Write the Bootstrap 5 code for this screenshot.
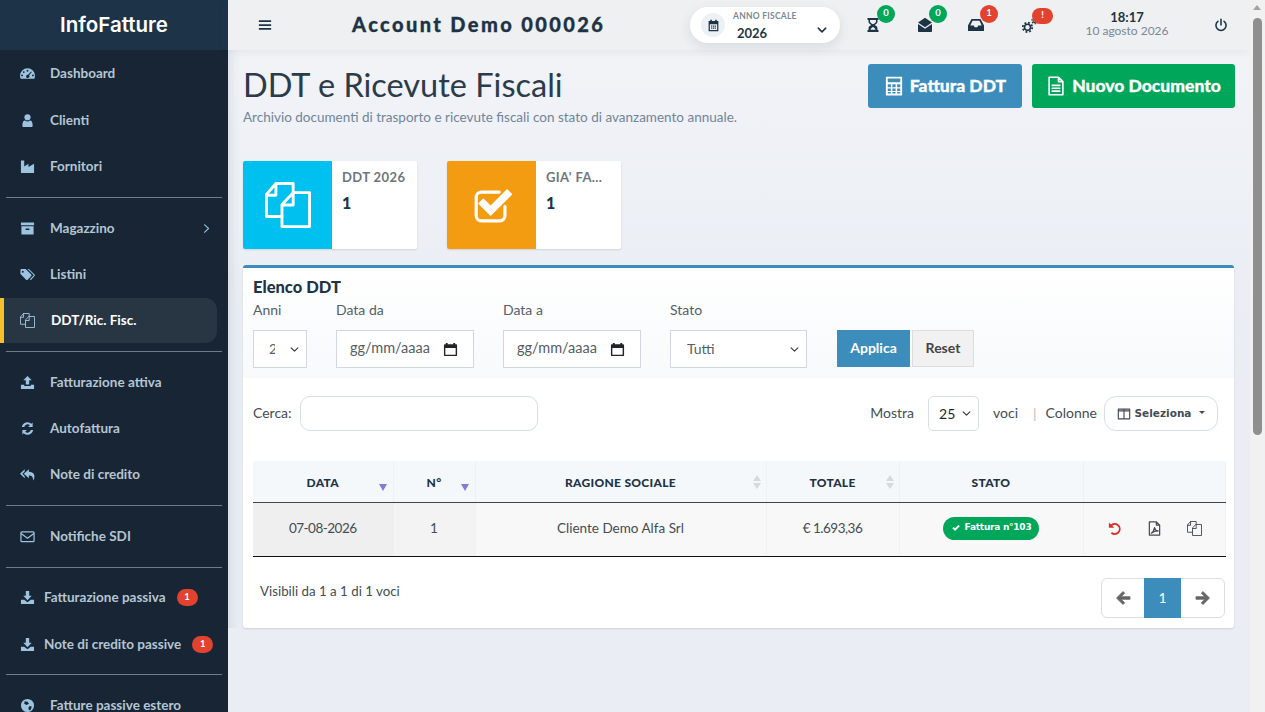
<!DOCTYPE html>
<html lang="it">
  <head>
    <meta charset="UTF-8" />
    <meta name="viewport" content="width=device-width, initial-scale=1.0" />
    <title>InfoFatture - DDT e Ricevute Fiscali</title>
    <link
      rel="stylesheet"
      href="https://cdn.jsdelivr.net/npm/bootstrap@5.3.3/dist/css/bootstrap.min.css"
    />
    <style>
      body { font-family: Lato, "Liberation Sans", sans-serif; font-size: 14px; color: #444c54; background: #eaeef4; }
      .app-shell { min-height: 1161px; padding-right: 15px; }
      .ico { width: 1em; height: 1em; fill: currentColor; flex: none; }
      .ico-line { fill: none; stroke: currentColor; stroke-width: 1.3; stroke-linejoin: round; stroke-linecap: round; }
      .heavy { -webkit-text-stroke: .3px currentColor; }

      /* window scrollbar */
      .win-scroll { position: fixed; top: 0; right: 0; bottom: 0; width: 15px; background: #f1f1f1; z-index: 10; }
      .win-scroll::before { content: ""; position: absolute; top: 5px; left: 3px; border-left: 4.5px solid transparent; border-right: 4.5px solid transparent; border-bottom: 5px solid #a3a3a3; }
      .win-thumb { position: absolute; top: 18px; left: 3px; width: 9px; height: 417px; background: #8f8f8f; border-radius: 5px; }

      /* sidebar */
      .side { width: 228px; flex: none; background: #172534; color: #b5c5d3; }
      .brand { height: 50px; background: #1d3448; color: #fff; font-family: Inter, sans-serif; font-weight: 600; font-size: 20.5px; }
      .side-link { height: 46px; padding-left: 20px; color: #b5c5d3; font-weight: 700; font-size: 13.5px; text-decoration: none; position: relative; }
      .side-link.first { height: 47px; padding-bottom: 1px; }
      .side-link .ico { font-size: 15px; color: #9cc3e0; }
      .side-link .lbl { margin-left: 15px; }
      .side-link.tight .lbl { margin-left: 9px; }
      .side-link.tight + .side-link.tight { margin-top: 1px; }
      .side-link.on { height: 45px; margin: 1px 11px 0 2px; padding-left: 18px; background: #283644; border-radius: 0 12px 12px 0; color: #fff; }
      .side-link.on::before { content: ""; position: absolute; left: -2px; top: 0; bottom: 0; width: 4px; background: #f5c02c; }
      .side-link.on .lbl { margin-left: 16px; }
      .side-rule { margin: 8px 6px 7px 6px; height: 1px; background: #6b7c8b; }
      .side-rule.snug { margin-bottom: 6px; }
      .side-rule.snug-top { margin-top: 7px; }
      .side-count { background: #e2432f; color: #fff; font-size: 9.5px; font-weight: 700; width: 21px; height: 17px; border-radius: 9px; margin-left: 11px; }

      /* topbar */
      .topbar { height: 50px; background: #eef0f1; padding-left: 30px; color: #1e3346; box-shadow: 0 2px 10px rgba(60, 80, 100, .08); position: relative; }
      .acct { font-weight: 900; font-size: 20px; letter-spacing: 2.4px; margin-left: 80px; width: 338px; white-space: nowrap; margin-top: -2px; }
      .year-pill { width: 150px; height: 36px; background: #fff; border-radius: 18px; box-shadow: 0 4px 12px rgba(60, 80, 100, .12); padding: 2px 12px 0 11px; }
      .year-ico { width: 24px; height: 24px; border-radius: 50%; background: #edf1f5; font-size: 13px; margin-top: -2px; }
      .year-cap { font-size: 8.5px; font-weight: 700; color: #7b8794; letter-spacing: .25px; line-height: 1; }
      .year-val { font-size: 13px; font-weight: 700; line-height: 1; margin-top: 6px; padding-left: 4px; }
      .top-ico { position: relative; font-size: 16px; width: 16px; margin-top: -1px; }
      .top-num { position: absolute; top: -12px; left: 12px; width: 18px; height: 18px; border-radius: 50%; color: #fff; font-size: 9.5px; font-weight: 700; }
      .top-num.wide { width: 21px; height: 16px; border-radius: 8px; top: -9px; left: 10px; }
      .num-green { background: #00a65a; }
      .num-red { background: #e2432f; }
      .clock { width: 110px; line-height: 1.1; margin-top: -3px; }
      .clock b { font-size: 13px; }
      .clock span { font-size: 12px; color: #7b8794; }

      /* page head */
      .page-body { padding: 14px 15px 0 15px; background: linear-gradient(180deg, #f1f3f7 0, #eaeef4 260px); box-shadow: inset 12px 0 12px -10px rgba(60, 80, 100, .14); }
      .page-title { font-size: 32.5px; font-weight: 400; color: #2c3b49; line-height: 44px; margin: -1px 0 1px; }
      .page-sub { font-size: 13.5px; color: #71859a; line-height: 18px; }
      .btn-big { height: 44px; font-size: 17.500px; font-weight: 900; color: #fff; border-radius: 3px; border: 0; padding: 0; }
      .btn-big .ico { font-size: 20px; margin-right: 6px; }
      .btn-blue { background: #3c8dbc; width: 154px; }
      .btn-green { background: #00a65a; width: 203px; }

      /* info boxes */
      .stat-box { width: 174px; height: 88px; background: #fff; border-radius: 2px; box-shadow: 0 1px 2px rgba(0, 0, 0, .12); overflow: hidden; }
      .stat-ico { width: 89px; color: #fff; font-size: 46px; }
      .stat-txt { padding-left: 10px; }
      .stat-cap { font-size: 13px; font-weight: 700; letter-spacing: .4px; color: #6c757d; margin-top: 8px; line-height: 16px; }
      .stat-num { font-size: 16px; font-weight: 900; color: #1e3346; margin-top: 8px; line-height: 20px; }
      .bg-sky { background: #00c0ef; }
      .bg-amber { background: #f39c12; }

      /* list card */
      .list-box { border: 0; border-top: 3px solid #3c8dbc; border-radius: 3px; box-shadow: 0 1px 2px rgba(0, 0, 0, .12); height: 363px; background: #fff; width: 991px; margin-top: 16px; }
      .filter-zone { height: 110px; padding: 7px 10px 0; background: linear-gradient(180deg, #fff 0, #f7f9fb 100%); }
      .list-title { font-size: 16.5px; font-weight: 900; color: #1e3346; line-height: 24px; }
      .fld-label { font-size: 14px; color: #555e66; line-height: 21px; margin-bottom: 10px; }
      .fld { height: 38px; border-radius: 0; border: 1px solid #d2d6de; font-size: 14px; color: #555e66; background-color: #fff; padding-top: 4px; padding-bottom: 6px; }
      .form-select.fld, .form-select.round-fld { background-size: 11px 9px; background-position: right 6px center; }
      .fld-year { width: 54px; padding-left: 15px; padding-right: 31px; }
      .fld-date { width: 138px; padding: 0 15px 2px 13px; font-size: 14.5px; }
      .fld-date .ico { font-size: 15px; color: #212529; margin-top: 2px; }
      .fld-state { width: 137px; padding-left: 16px; }
      .btn-apply { background: #3c8dbc; color: #fff; height: 37px; width: 73px; font-weight: 700; font-size: 14px; border-radius: 0; border: 0; padding-bottom: 8px; }
      .btn-reset { background: #f1f1f1; color: #444; height: 37px; width: 62px; font-weight: 700; font-size: 14px; border-radius: 0; border: 1px solid #ddd; padding-bottom: 8px; }
      .round-fld { height: 35px; border: 1px solid #d5dfe8; border-radius: 10px; font-size: 14px; }
      .pick-btn { height: 35px; width: 114px; border: 1px solid #d5dfe8; border-radius: 12px; background: #fff; font-family: "DejaVu Sans", sans-serif; font-weight: 700; font-size: 10.5px; color: #444c54; padding: 0; }
      .txt-up { margin-bottom: 2px; }
      .tbl-wrap { margin: 30px 8px 0 10px; }
      .ddt-table { table-layout: fixed; margin: 0; width: 972px; font-size: 13.5px; }
      .ddt-table th { height: 41px; background: #f5f8fb; color: #1e3346; font-size: 12px; letter-spacing: .3px; font-weight: 900; text-align: center; vertical-align: middle; border-bottom: 1px solid #444; border-right: 1px solid #eef1f4; position: relative; padding: 3px 0 0; }
      .ddt-table td { height: 54px; background: #f8f8f8; color: #444c54; text-align: center; vertical-align: middle; border-bottom: 1px solid #111; border-right: 1px solid #f1f1f1; padding: 0 0 2px; }
      .ddt-table td.sort-a { background: #efefef; }
      .ddt-table td.sort-b { background: #f3f3f3; }
      .num-tight { letter-spacing: -.5px; }
      .sort-mark { position: absolute; right: 6px; bottom: 11px; width: 0; height: 0; border-left: 4px solid transparent; border-right: 4px solid transparent; border-top: 7px solid #7b7fd0; }
      .sort-idle { position: absolute; right: 5px; top: 14px; width: 8px; height: 14px; fill: #d5dadf; }
      .ok-pill { background: #00a65a; color: #fff; font-size: 9px; font-weight: 700; border-radius: 12px; height: 23px; padding: 0 8px; font-family: "DejaVu Sans", sans-serif; letter-spacing: -.25px; }
      .row-ico { font-size: 15px; color: #444c54; }
      .row-red { color: #dd2c2c; }
      .visible-note { margin-top: 4px; font-size: 13.3px; }
      .pager .page-link { height: 40px; color: #666; border-color: #ddd; font-size: 14px; display: flex; align-items: center; justify-content: center; padding: 0; background: #fff; }
      .pager .page-item:first-child .page-link { width: 44px; font-size: 16px; }
      .pager .page-item:last-child .page-link { width: 45px; font-size: 16px; }
      .pager .page-item.active .page-link { width: 37px; background: #3c8dbc; border-color: #3c8dbc; color: #fff; }
      .pager .ico { stroke: currentColor; stroke-width: .8; }
    </style>
  </head>
  <body>
    <!-- ICON SPRITE -->
    <svg class="d-none" xmlns="http://www.w3.org/2000/svg">
      <symbol id="i-gauge" viewBox="0 0 16 16"><path fill-rule="evenodd" d="M8 2.500a8 8 0 0 0-8 8c0 1.200.3 2.300.7 3.200h14.600c.4-.9.7-2 .7-3.200a8 8 0 0 0-8-8zM8 4a1 1 0 1 1 0 2 1 1 0 0 1 0-2zM4 5.500a1 1 0 1 1 0 2 1 1 0 0 1 0-2zM2.200 9a1 1 0 1 1 0 2 1 1 0 0 1 0-2zM13.800 9a1 1 0 1 1 0 2 1 1 0 0 1 0-2zM11.800 5.800l.8.5L9.600 10a1.700 1.700 0 1 1-.9-.6z"/></symbol>
      <symbol id="i-user" viewBox="0 0 16 16"><circle cx="8" cy="4.500" r="3.300"/><path d="M4 15c-1 0-1.500-.6-1.500-1.500C2.500 10 3.500 8 5.300 8c.8.600 1.700 1 2.700 1s1.900-.4 2.700-1c1.800 0 2.800 2 2.800 5.500 0 .9-.5 1.500-1.500 1.500z"/></symbol>
      <symbol id="i-industry" viewBox="0 0 16 16"><path d="M1 15V1.500h3.500V8L9 5v3.500L15 5v10z"/></symbol>
      <symbol id="i-archive" viewBox="0 0 16 16"><path fill-rule="evenodd" d="M1 1.500h14v3H1zM1.500 5.500h13v9h-13zM6 8v1.500h4V8z"/></symbol>
      <symbol id="i-tags" viewBox="0 0 16 16"><path fill-rule="evenodd" d="M.5 3v4.500l6 6c.5.5 1.200.5 1.700 0l3.800-3.800c.5-.5.5-1.200 0-1.700l-6-6H1.500c-.6 0-1 .4-1 1zM3 4a1 1 0 1 1 0 2 1 1 0 0 1 0-2z"/><path d="M8 2h1.500l6 6c.5.5.5 1.200 0 1.700L11.500 14l-1-1 3.800-3.800c.3-.3.3-.7 0-1z"/></symbol>
      <symbol id="i-copy" viewBox="0 0 16 16"><g fill="none" stroke="currentColor" stroke-width="1" stroke-linejoin="round" stroke-linecap="round"><path d="M5.900 12H.5V4.300L3.800.5h6v3.200M.5 4.600h3.300V.5"/><path d="M9.800 3.700h5.700v11.800H5.900V7.800zM5.900 8h3.900V3.700"/></g></symbol>
      <symbol id="i-upload" viewBox="0 0 16 16"><path d="M8 1 3.500 5.500h2.700V10h3.600V5.500h2.700zM1 10.500h3.500v1.200h7v-1.200H15V15H1z"/></symbol>
      <symbol id="i-download" viewBox="0 0 16 16"><path d="M6.200 1h3.600v5h2.700L8 10.800 3.500 6h2.700zM1 10.500h3.500L8 13l3.500-2.500H15V15H1z"/></symbol>
      <symbol id="i-sync" viewBox="0 0 16 16"><path d="M13.500 1.500v4.800H8.700l1.800-1.800A3.700 3.700 0 0 0 4.500 6.300H2A6 6 0 0 1 12.100 3zM2.500 14.500V9.700h4.800l-1.800 1.800a3.700 3.700 0 0 0 6-1.800H14A6 6 0 0 1 3.900 13z"/></symbol>
      <symbol id="i-replyall" viewBox="0 0 16 16"><path d="M5 2.500 0 7.300 5 12V9.800L2.500 7.300 5 4.800z"/><path d="M9.500 2.500 4 7.300 9.500 12V9c3 0 4.500 1 4.500 5.500 2.200-3.500 2.500-9-4.500-9.500z"/></symbol>
      <symbol id="i-mail" viewBox="0 0 16 16"><rect class="ico-line" x="1" y="3" width="14" height="10.500" rx="1"/><path class="ico-line" d="m1.500 5 6.500 4.800L14.500 5"/></symbol>
      <symbol id="i-globe" viewBox="0 0 16 16"><path fill-rule="evenodd" d="M8 1a7 7 0 1 0 0 14A7 7 0 0 0 8 1zM5 3.500l3 .5 1.500 2L7 7.500 4.500 6zM10.500 8.500l2 .5-1 3.500-2 .5-.5-3z"/></symbol>
      <symbol id="i-bars" viewBox="0 0 16 16"><path d="M1 2.500h14v2H1zM1 7h14v2H1zM1 11.500h14v2H1z"/></symbol>
      <symbol id="i-calendar" viewBox="0 0 16 16"><path fill-rule="evenodd" d="M4 1h2v1.500h4V1h2v1.500h2V15H2V2.500h2zM3.500 6.500v7h9v-7zM5 8h1.500v1.500H5zM7.300 8h1.500v1.500H7.300zM9.500 8H11v1.500H9.500zM5 10.500h1.500V12H5zM7.300 10.500h1.500V12H7.300zM9.500 10.500H11V12H9.500z"/></symbol>
      <symbol id="i-datepick" viewBox="0 0 16 16"><path fill-rule="evenodd" d="M3 1h2v1.500h6V1h2v1.500h1c.6 0 1 .4 1 1V14c0 .6-.4 1-1 1H2c-.6 0-1-.4-1-1V3.500c0-.6.4-1 1-1h1zM2.500 6.500v7h11v-7z"/></symbol>
      <symbol id="i-hourglass" viewBox="0 0 16 16"><path fill-rule="evenodd" d="M2.500 1h11v2h-1v1.500c0 1.800-1.300 2.700-2.700 3.500 1.400.8 2.700 1.700 2.700 3.500V13h1v2h-11v-2h1v-1.500c0-1.800 1.300-2.700 2.700-3.500-1.400-.8-2.700-1.700-2.700-3.500V3h-1zM5 3v1.500c0 1.200 1.500 2 3 2.800 1.500-.8 3-1.600 3-2.800V3zM5.500 12.800h5c-.3-1.200-1.300-2-2.500-2.700-1.200.7-2.200 1.500-2.500 2.700z"/></symbol>
      <symbol id="i-mailopen" viewBox="0 0 16 16"><path d="M8 .8 1 5.500l7 4.700 7-4.700zM1 7v7c0 .6.4 1 1 1h12c.6 0 1-.4 1-1V7l-7 4.700z"/></symbol>
      <symbol id="i-inbox" viewBox="0 0 16 16"><path fill-rule="evenodd" d="M3.500 2h9L16 8.500V14H0V8.500zM4.500 3.700 2.300 8.500h3.400l1 1.800h2.600l1-1.800h3.400l-2.200-4.800z"/></symbol>
      <symbol id="i-cogs" viewBox="0 0 16 16"><g fill="none" stroke="currentColor"><circle cx="5.500" cy="10.300" r="3" stroke-width="1.600"/><circle cx="5.500" cy="10.300" r="4.700" stroke-width="1.800" stroke-dasharray="1.845"/><circle cx="12.800" cy="3.800" r="1.800" stroke-width="1.100"/><circle cx="12.800" cy="3.800" r="3" stroke-width="1.100" stroke-dasharray="1.570"/></g></symbol>
      <symbol id="i-power" viewBox="0 0 16 16"><path class="ico-line" style="stroke-width:1.800" d="M8 1.500v6.500M4.500 3.800a5.800 5.800 0 1 0 7 0"/></symbol>
      <symbol id="i-calc" viewBox="0 0 16 16"><path fill-rule="evenodd" d="M1.500 .5h13v15h-13zM3 2v3h10V2zM3 6.500V9h2.500V6.500zM6.700 6.500V9h2.600V6.500zM10.500 6.500V9H13V6.500zM3 10v2h2.500v-2zM6.700 10v2h2.600v-2zM10.500 10v2H13v-2zM3 12.800V14h2.500v-1.200zM6.700 12.800V14h2.600v-1.200zM10.500 12.800V14H13v-1.200z"/></symbol>
      <symbol id="i-file" viewBox="0 0 16 16"><path class="ico-line" d="M2.500 1h7.500l3.500 3.500V15h-11zM10 1v3.500h3.500M5 7.500h6M5 9.800h6M5 12.100h6"/></symbol>
      <symbol id="i-checkbox" viewBox="0 0 32 32"><path d="M24 17v6.500a3.500 3.500 0 0 1-3.500 3.500h-13A3.500 3.500 0 0 1 4 23.500v-13A3.500 3.500 0 0 1 7.500 7H20" fill="none" stroke="currentColor" stroke-width="2.200" stroke-linecap="round" transform="translate(1 0)"/><path d="M7 15l3-3 5 5L26.500 5.500l3 3L15 23z" stroke="currentColor" stroke-width="1" stroke-linejoin="round"/></symbol>
      <symbol id="i-undo" viewBox="0 0 16 16"><path d="M2 1.500v5.800h5.800L5.600 5.100a4.300 4.300 0 1 1-.2 6.500L4 13.200A6.300 6.300 0 1 0 4.200 3.700z"/></symbol>
      <symbol id="i-pdf" viewBox="0 0 16 16"><path class="ico-line" d="M2.500 1h7.500l3.500 3.500V15h-11zM10 1v3.500h3.500M4.500 13c2-1 3-3 3.500-6 .5 2 1.500 3.500 4 3.500-2.500 0-5.500 1-7.500 2.500z"/></symbol>
      <symbol id="i-columns" viewBox="0 0 16 16"><path class="ico-line" d="M1.500 2.500h13v11h-13zM8 2.500v11M1.500 4.500h13"/></symbol>
      <symbol id="i-left" viewBox="0 0 16 16"><path d="M8 1.500 1.500 8 8 14.500l1.700-1.700L6.100 9.300H15V6.700H6.100l3.600-3.500z"/></symbol>
      <symbol id="i-right" viewBox="0 0 16 16"><path d="M8 1.500 14.500 8 8 14.500l-1.700-1.700 3.600-3.500H1V6.700h8.900L6.300 3.200z"/></symbol>
      <symbol id="i-check" viewBox="0 0 16 16"><path d="M2 8.500 4.300 6.200 6.500 8.400 11.900 3 14 5.200 6.500 12.800z"/></symbol>
      <symbol id="i-chev" viewBox="0 0 16 16"><path class="ico-line" style="stroke-width:2" d="m3 5.500 5 5 5-5"/></symbol>
      <symbol id="i-chevr" viewBox="0 0 16 16"><path class="ico-line" style="stroke-width:1.500" d="m5 2.500 6 5.500-6 5.500"/></symbol>
    </svg>

    <div class="app-shell d-flex">
      <aside class="side">
        <div class="brand d-flex align-items-center justify-content-center">InfoFatture</div>
        <nav class="d-flex flex-column">
          <a href="#" class="side-link first d-flex align-items-center"><svg class="ico"><use href="#i-gauge" /></svg><span class="lbl">Dashboard</span></a>
          <a href="#" class="side-link d-flex align-items-center"><svg class="ico"><use href="#i-user" /></svg><span class="lbl">Clienti</span></a>
          <a href="#" class="side-link d-flex align-items-center"><svg class="ico"><use href="#i-industry" /></svg><span class="lbl">Fornitori</span></a>
          <div class="side-rule"></div>
          <a href="#" class="side-link d-flex align-items-center"><svg class="ico"><use href="#i-archive" /></svg><span class="lbl">Magazzino</span><svg class="ico ms-auto me-3" style="font-size: 11px"><use href="#i-chevr" /></svg></a>
          <a href="#" class="side-link d-flex align-items-center"><svg class="ico"><use href="#i-tags" /></svg><span class="lbl">Listini</span></a>
          <a href="#" class="side-link on d-flex align-items-center"><svg class="ico"><use href="#i-copy" /></svg><span class="lbl">DDT/Ric. Fisc.</span></a>
          <div class="side-rule"></div>
          <a href="#" class="side-link d-flex align-items-center"><svg class="ico"><use href="#i-upload" /></svg><span class="lbl">Fatturazione attiva</span></a>
          <a href="#" class="side-link d-flex align-items-center"><svg class="ico"><use href="#i-sync" /></svg><span class="lbl">Autofattura</span></a>
          <a href="#" class="side-link d-flex align-items-center"><svg class="ico"><use href="#i-replyall" /></svg><span class="lbl">Note di credito</span></a>
          <div class="side-rule"></div>
          <a href="#" class="side-link d-flex align-items-center"><svg class="ico"><use href="#i-mail" /></svg><span class="lbl">Notifiche SDI</span></a>
          <div class="side-rule snug"></div>
          <a href="#" class="side-link tight d-flex align-items-center"><svg class="ico"><use href="#i-download" /></svg><span class="lbl">Fatturazione passiva</span><span class="side-count d-flex align-items-center justify-content-center">1</span></a>
          <a href="#" class="side-link tight d-flex align-items-center"><svg class="ico"><use href="#i-download" /></svg><span class="lbl">Note di credito passive</span><span class="side-count d-flex align-items-center justify-content-center">1</span></a>
          <div class="side-rule snug-top"></div>
          <a href="#" class="side-link d-flex align-items-center"><svg class="ico"><use href="#i-globe" /></svg><span class="lbl">Fatture passive estero</span></a>
        </nav>
      </aside>

      <div class="flex-grow-1">
        <header class="topbar d-flex align-items-center">
          <svg class="ico" style="font-size: 14px"><use href="#i-bars" /></svg>
          <div class="acct heavy">Account Demo 000026</div>
          <div class="year-pill d-flex align-items-center">
            <span class="year-ico d-flex align-items-center justify-content-center me-2"><svg class="ico"><use href="#i-calendar" /></svg></span>
            <div class="flex-grow-1">
              <div class="year-cap">ANNO FISCALE</div>
              <div class="year-val">2026</div>
            </div>
            <svg class="ico mt-2" style="font-size: 12px"><use href="#i-chev" /></svg>
          </div>
          <div class="top-ico d-flex" style="margin-left: 25px"><svg class="ico"><use href="#i-hourglass" /></svg><span class="top-num num-green d-flex align-items-center justify-content-center">0</span></div>
          <div class="top-ico d-flex" style="margin-left: 36px"><svg class="ico"><use href="#i-mailopen" /></svg><span class="top-num num-green d-flex align-items-center justify-content-center">0</span></div>
          <div class="top-ico d-flex" style="margin-left: 35px"><svg class="ico"><use href="#i-inbox" /></svg><span class="top-num num-red d-flex align-items-center justify-content-center">1</span></div>
          <div class="top-ico d-flex" style="margin-left: 38px"><svg class="ico"><use href="#i-cogs" /></svg><span class="top-num wide num-red d-flex align-items-center justify-content-center">!</span></div>
          <div class="clock text-center d-flex flex-column" style="margin-left: 34px"><b>18:17</b><span>10 agosto 2026</span></div>
          <svg class="ico" style="font-size: 14px; margin-left: 32px"><use href="#i-power" /></svg>
        </header>

        <main class="page-body">
          <div class="d-flex justify-content-between align-items-start">
            <div>
              <h1 class="page-title">DDT e Ricevute Fiscali</h1>
              <div class="page-sub">Archivio documenti di trasporto e ricevute fiscali con stato di avanzamento annuale.</div>
            </div>
            <div class="d-flex" style="gap: 10px">
              <button class="btn btn-big btn-blue heavy d-flex align-items-center justify-content-center"><svg class="ico"><use href="#i-calc" /></svg>Fattura DDT</button>
              <button class="btn btn-big btn-green heavy d-flex align-items-center justify-content-center"><svg class="ico"><use href="#i-file" /></svg>Nuovo Documento</button>
            </div>
          </div>

          <div class="d-flex" style="gap: 30px; margin-top: 35px">
            <div class="stat-box d-flex">
              <div class="stat-ico bg-sky d-flex align-items-center justify-content-center"><svg class="ico"><use href="#i-copy" /></svg></div>
              <div class="stat-txt">
                <div class="stat-cap">DDT 2026</div>
                <div class="stat-num">1</div>
              </div>
            </div>
            <div class="stat-box d-flex">
              <div class="stat-ico bg-amber d-flex align-items-center justify-content-center"><svg class="ico"><use href="#i-checkbox" /></svg></div>
              <div class="stat-txt">
                <div class="stat-cap">GIA' FA...</div>
                <div class="stat-num">1</div>
              </div>
            </div>
          </div>

          <section class="card list-box">
            <div class="filter-zone">
              <div class="list-title">Elenco DDT</div>
              <div class="d-flex align-items-end">
                <div style="margin-right: 29px">
                  <div class="fld-label">Anni</div>
                  <select class="form-select fld fld-year"><option>2026</option></select>
                </div>
                <div style="margin-right: 29px">
                  <div class="fld-label">Data da</div>
                  <div class="fld fld-date d-flex align-items-center justify-content-between"><span>gg/mm/aaaa</span><svg class="ico"><use href="#i-datepick" /></svg></div>
                </div>
                <div style="margin-right: 29px">
                  <div class="fld-label">Data a</div>
                  <div class="fld fld-date d-flex align-items-center justify-content-between"><span>gg/mm/aaaa</span><svg class="ico"><use href="#i-datepick" /></svg></div>
                </div>
                <div style="margin-right: 30px">
                  <div class="fld-label">Stato</div>
                  <select class="form-select fld fld-state"><option>Tutti</option></select>
                </div>
                <button class="btn btn-apply me-1" style="margin-bottom: 1px">Applica</button>
                <button class="btn btn-reset" style="margin-bottom: 1px; margin-left: -2px">Reset</button>
              </div>
            </div>

            <div class="d-flex align-items-center" style="padding: 18px 16px 0 10px">
              <label class="me-2 txt-up">Cerca:</label>
              <input type="text" class="form-control round-fld" style="width: 238px" />
              <span class="ms-auto txt-up">Mostra</span>
              <select class="form-select round-fld" style="width: 51px; margin-left: 14px; padding: 0 0 0 10px; border-radius: 5px"><option>25</option></select>
              <span class="txt-up" style="margin-left: 14px">voci</span>
              <span class="text-secondary txt-up" style="margin: 0 9px 0 15px; opacity: .5">|</span>
              <span class="txt-up" style="margin-right: 7px">Colonne</span>
              <button class="pick-btn d-flex align-items-center justify-content-center"><svg class="ico me-1" style="font-size: 14px"><use href="#i-columns" /></svg>Seleziona<span class="dropdown-toggle ms-2"></span></button>
            </div>

            <div class="tbl-wrap">
              <table class="table ddt-table">
                <colgroup>
                  <col style="width: 140px" />
                  <col style="width: 82px" />
                  <col style="width: 291px" />
                  <col style="width: 133px" />
                  <col style="width: 184px" />
                  <col style="width: 142px" />
                </colgroup>
                <thead>
                  <tr>
                    <th>DATA<span class="sort-mark"></span></th>
                    <th>N°<span class="sort-mark"></span></th>
                    <th>RAGIONE SOCIALE<svg class="sort-idle" viewBox="0 0 8 14"><path d="M4 0l4 6H0zM4 14 0 8h8z" /></svg></th>
                    <th>TOTALE<svg class="sort-idle" viewBox="0 0 8 14"><path d="M4 0l4 6H0zM4 14 0 8h8z" /></svg></th>
                    <th>STATO</th>
                    <th></th>
                  </tr>
                </thead>
                <tbody>
                  <tr>
                    <td class="sort-a num-tight">07-08-2026</td>
                    <td class="sort-b">1</td>
                    <td>Cliente Demo Alfa Srl</td>
                    <td class="num-tight">€ 1.693,36</td>
                    <td><span class="ok-pill d-inline-flex align-items-center"><svg class="ico me-1" style="font-size: 10px"><use href="#i-check" /></svg>Fattura n°103</span></td>
                    <td>
                      <div class="d-flex justify-content-center" style="gap: 25px">
                        <svg class="ico row-ico row-red"><use href="#i-undo" /></svg>
                        <svg class="ico row-ico"><use href="#i-pdf" /></svg>
                        <svg class="ico row-ico"><use href="#i-copy" /></svg>
                      </div>
                    </td>
                  </tr>
                </tbody>
              </table>
            </div>

            <div class="d-flex justify-content-between" style="padding: 21px 9px 0 17px">
              <div class="visible-note">Visibili da 1 a 1 di 1 voci</div>
              <ul class="pagination pager m-0">
                <li class="page-item"><a class="page-link" href="#"><svg class="ico"><use href="#i-left" /></svg></a></li>
                <li class="page-item active"><a class="page-link" href="#">1</a></li>
                <li class="page-item"><a class="page-link" href="#"><svg class="ico"><use href="#i-right" /></svg></a></li>
              </ul>
            </div>
          </section>
        </main>
      </div>
    </div>

    <div class="win-scroll"><div class="win-thumb"></div></div>

    <script src="https://cdn.jsdelivr.net/npm/bootstrap@5.3.3/dist/js/bootstrap.bundle.min.js"></script>
  </body>
</html>
